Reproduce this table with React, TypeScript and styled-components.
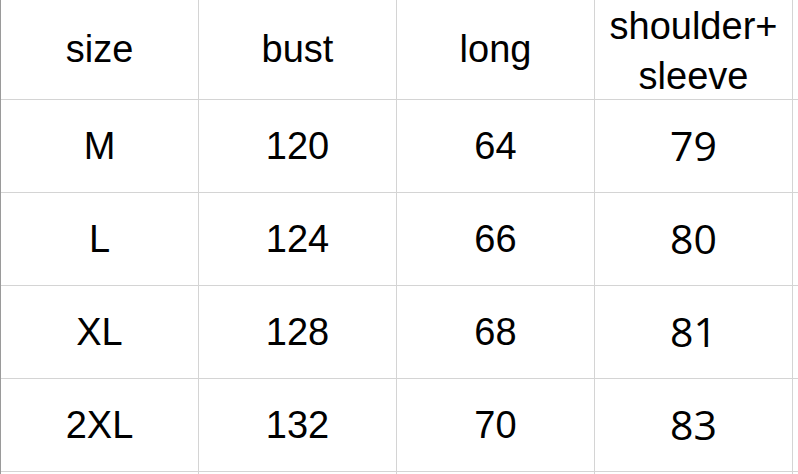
import React from "react";
import styled, { createGlobalStyle } from "styled-components";

const Global = createGlobalStyle`
  html, body { margin: 0; padding: 0; background: #fff; overflow: hidden; }
  body { font-family: "Liberation Sans", Arial, sans-serif; }
`;

const Sheet = styled.div`
  display: grid;
  grid-template-columns: repeat(4, 198px) 1fr;
  grid-template-rows: 100px repeat(4, 93px) 1fr;
  border-left: 1px solid #9a9a9a;
  width: 798px;
  height: 474px;
  box-sizing: border-box;
  overflow: hidden;
`;

const Cell = styled.div<{ $alt?: boolean; $wrap?: boolean; $openRight?: boolean; $openBottom?: boolean }>`
  box-sizing: border-box;
  min-width: 0;
  min-height: 0;
  border-right: ${(p) => (p.$openRight ? "none" : "1px solid #d4d4d4")};
  border-bottom: ${(p) => (p.$openBottom ? "none" : "1px solid #d4d4d4")};
  display: flex;
  align-items: center;
  justify-content: center;
  text-align: center;
  color: #000;
  font-family: ${(p) =>
    p.$alt ? '"Open Sans", "Noto Sans", sans-serif' : '"Liberation Sans", Arial, sans-serif'};
  font-size: ${(p) => (p.$alt ? "41px" : "38px")};
  line-height: ${(p) => (p.$wrap ? "50px" : "normal")};
  padding-top: ${(p) => (p.$wrap ? "3px" : "0")};
  padding-bottom: ${(p) => (p.$alt ? "2px" : "0")};
`;

const header = ["size", "bust", "long", "shoulder+\nsleeve"];
const rows = [
  ["M", "120", "64", "79"],
  ["L", "124", "66", "80"],
  ["XL", "128", "68", "81"],
  ["2XL", "132", "70", "83"],
];

export default function App() {
  return (
    <>
      <Global />
      <Sheet>
        {header.map((h, i) => {
          const lines = h.split("\n");
          return (
            <Cell key={"h" + i} $wrap={lines.length > 1}>
              <span>
                {lines.map((l, j) => (
                  <React.Fragment key={j}>
                    {j > 0 && <br />}
                    {l}
                  </React.Fragment>
                ))}
              </span>
            </Cell>
          );
        })}
        <Cell $openRight />
        {rows.map((r, ri) => (
          <React.Fragment key={ri}>
            {r.map((v, ci) => (
              <Cell key={ci} $alt={ci === 3}>
                {v}
              </Cell>
            ))}
            <Cell $openRight />
          </React.Fragment>
        ))}
        {[0, 1, 2, 3, 4].map((i) => (
          <Cell key={"e" + i} $openBottom $openRight={i === 4} />
        ))}
      </Sheet>
    </>
  );
}
